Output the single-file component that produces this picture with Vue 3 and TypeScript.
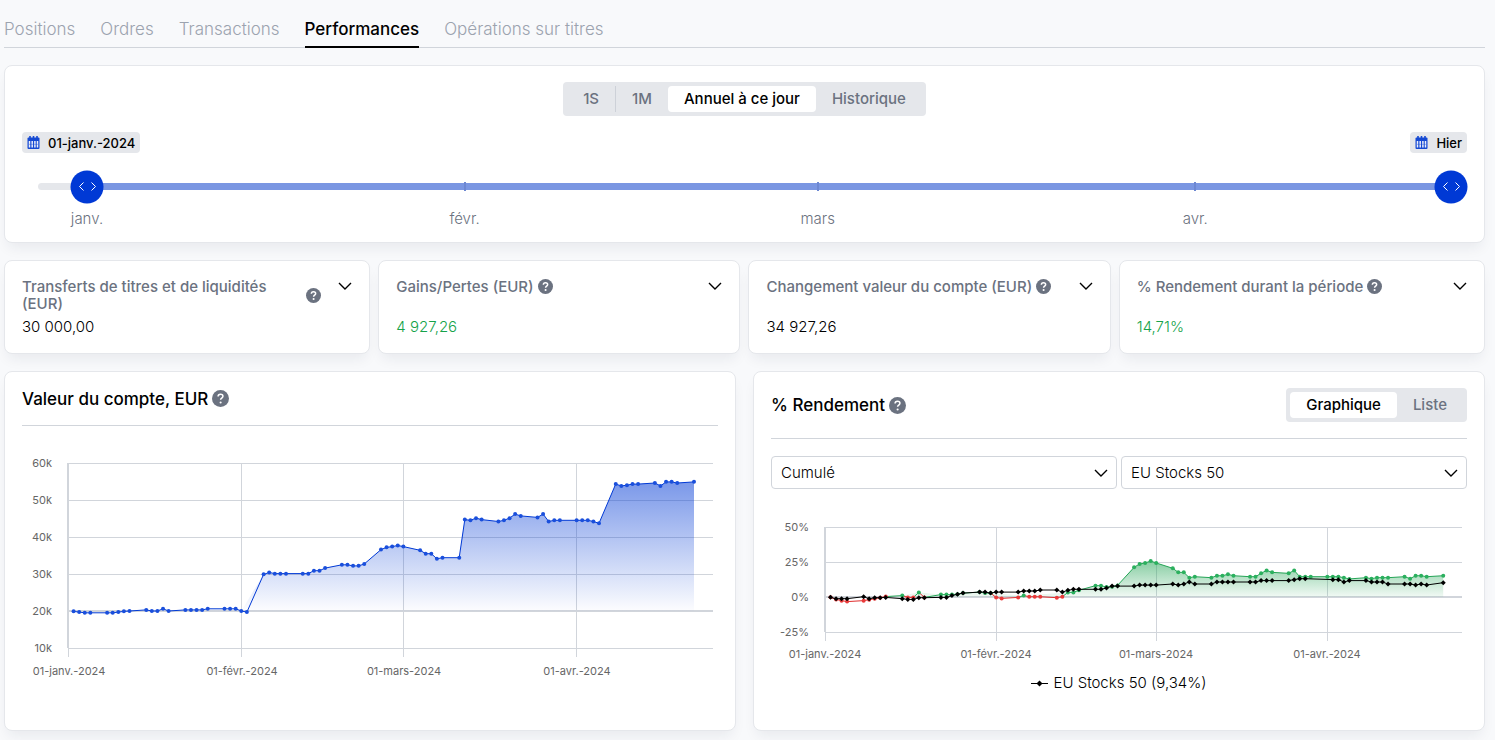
<script setup lang="ts">
import { computed, onBeforeUnmount, onMounted, ref } from 'vue'

interface Stat {
  title: string
  value: string
  positive: boolean
}
interface Dot {
  x: number
  y: number
  v: number
}

const tabs = ['Positions', 'Ordres', 'Transactions', 'Performances', 'Opérations sur titres']
const activeTab = ref('Performances')

const periods = ['1S', '1M', 'Annuel à ce jour', 'Historique']
const period = ref('Annuel à ce jour')

const views = ['Graphique', 'Liste']
const view = ref('Graphique')

const mode = ref('Cumulé')
const benchmark = ref('EU Stocks 50')

const stats: Stat[] = [
  { title: 'Transferts de titres et de liquidités (EUR)', value: '30 000,00', positive: false },
  { title: 'Gains/Pertes (EUR)', value: '4 927,26', positive: true },
  { title: 'Changement valeur du compte (EUR)', value: '34 927,26', positive: false },
  { title: '% Rendement durant la période', value: '14,71%', positive: true },
]

// Days elapsed since 1 January 2024
const months = [
  { day: 0, label: '01-janv.-2024', short: 'janv.' },
  { day: 31, label: '01-févr.-2024', short: 'févr.' },
  { day: 60, label: '01-mars-2024', short: 'mars' },
  { day: 91, label: '01-avr.-2024', short: 'avr.' },
]
const lastDay = 112
const domainDays = 115.4

// Trading days, Monday to Friday, starting on Tuesday 2 January
const tradingDays: number[] = []
for (let d = 1; d <= lastDay; d++) if (d % 7 < 5) tradingDays.push(d)

const accountValues = [
  19.9, 19.7, 19.5, 19.5,
  19.5, 19.5, 19.7, 19.9, 20,
  20.3, 20, 20, 20.6, 20,
  20.3, 20.3, 20.3, 20.3, 20.6,
  20.6, 20.6, 20.6, 20, 19.7,
  29.9, 30.4, 30.1, 30.1, 30.1,
  30.1, 30.1, 30.9, 30.9, 31.6,
  32.5, 32.5, 32.2, 32.2, 32.7,
  36.6, 37.2, 37.4, 37.7, 37.4,
  36.4, 35.5, 35.5, 34.1, 34.4,
  34.4, 44.7, 44.5, 45.1, 44.7,
  44.2, 44.5, 45.1, 46.2, 45.7,
  45.3, 46.2, 44.2, 44.5, 44.5,
  44.5, 44.5, 44.5, 44.2, 43.7,
  54.3, 53.8, 54, 54.3, 54.3,
  54.6, 53.8, 54.9, 54.9, 54.6,
  54.9,
]
const returnValues = [
  -0.2, -1.7, -2.6, -3.3,
  -2.6, -1.9, -1.2, -0.5, 0.3,
  1, -0.3, -0.3, 3.3, -0.3,
  1.7, 1.7, 1.7, 2, 2.8,
  3.5, 2.8, 2.8, -0.3, -1,
  -0.3, 1, 0.2, 0.2, 0.2,
  -0.5, 0.2, 3.3, 3.3, 4.8,
  8.1, 8.1, 7.1, 7.4, 8.3,
  21.2, 23.6, 24.3, 25.7, 24.3,
  20.5, 17.6, 17.6, 13.8, 14.5,
  13.8, 15.2, 15.2, 16.2, 15.2,
  14.5, 14.5, 16.9, 19, 17.6,
  16.9, 19, 14.5, 14.5, 14.5,
  14.5, 14.5, 14.5, 13.8, 12.9,
  13.8, 13.1, 13.8, 13.8, 13.8,
  14.5, 13.1, 15.2, 15.2, 14.5,
  15.2,
]
// null marks a day on which the benchmark's exchange is closed
const benchmarkValues: (number | null)[] = [
  -0.2, -1.2, -1.2, -1.2,
  0.2, -1.2, -0.5, -0.5, -0.3,
  -1.2, -1.7, -1.7, -0.5, -0.5,
  -0.3, -0.3, 1, 1.9, 2.8,
  3.5, 3.5, 2.8, 3.5, 3.5,
  3.5, 4.3, 4.3, 4.3, 5,
  5, 3.5, 4.8, 5.5, 5.5,
  5.5, 5.5, 6.4, 7.8, 7.8,
  7.8, 8.5, 8.5, 8.5, 8.5,
  9.3, 8.6, 9.3, 10.7, 9.3,
  9.3, 10.7, 10.7, 10.7, 10.7,
  10.7, 10.7, 11.7, 11.7, 11.7,
  11.7, 12.4, 13.1, 13.1, null,
  null, 12.4, 12.4, 10.7, 11.7,
  11.7, 10.7, 10.7, 10.7, 9.3,
  9.3, 9.3, 8.6, 9.3, 8.6,
  10.2,
]

const accountBox = ref<HTMLElement | null>(null)
const returnBox = ref<HTMLElement | null>(null)
const accountWidth = ref(697)
const returnWidth = ref(697)
let observer: ResizeObserver | undefined

function measure() {
  if (accountBox.value) accountWidth.value = accountBox.value.clientWidth
  if (returnBox.value) returnWidth.value = returnBox.value.clientWidth
}
onMounted(() => {
  measure()
  observer = new ResizeObserver(measure)
  if (accountBox.value) observer.observe(accountBox.value)
  if (returnBox.value) observer.observe(returnBox.value)
})
onBeforeUnmount(() => observer?.disconnect())

function buildDots(values: (number | null)[], x: (d: number) => number, y: (v: number) => number): Dot[] {
  const out: Dot[] = []
  values.forEach((v, i) => {
    if (v !== null) out.push({ x: x(tradingDays[i]), y: y(v), v })
  })
  return out
}
const toLine = (dots: Dot[]) => dots.map((p) => `${p.x.toFixed(1)},${p.y.toFixed(1)}`).join(' ')
const toArea = (dots: Dot[], base: number) =>
  `${dots[0].x.toFixed(1)},${base} ${toLine(dots)} ${dots[dots.length - 1].x.toFixed(1)},${base}`

const account = computed(() => {
  const left = 46
  const right = accountWidth.value - 5
  const x = (d: number) => left + (d * (right - left)) / domainDays
  const y = (v: number) => 204 - ((v - 10) * 185) / 50
  const dots = buildDots(accountValues, x, y)
  return {
    left,
    right,
    dots,
    line: toLine(dots),
    area: toArea(dots.filter((p) => p.v > 19.8), y(20)),
    ticks: [60, 50, 40, 30, 20, 10].map((v) => ({ label: `${v}k`, y: Math.round(y(v)), strong: v === 20 })),
    months: months.map((m) => ({ label: m.label, x: Math.floor(x(m.day)) })),
  }
})

const returns = computed(() => {
  const left = 54
  const right = returnWidth.value - 5
  const x = (d: number) => left + (d * (right - left)) / domainDays
  const y = (v: number) => 87 - v * 1.4
  const dots = buildDots(returnValues, x, y)
  const bench = buildDots(benchmarkValues, x, y)
  return {
    left,
    right,
    dots,
    bench,
    segments: dots.slice(1).map((p, i) => ({ a: dots[i], b: p })),
    benchLine: toLine(bench),
    area: toArea(dots.filter((p) => p.v > 0.5), y(0)),
    ticks: [50, 25, 0, -25].map((v) => ({ label: `${v}%`, y: Math.round(y(v)), strong: v === 0 })),
    months: months.map((m) => ({ label: m.label, x: Math.floor(x(m.day)) })),
  }
})

const tone = (v: number) => (v > 0.5 ? 'gain' : 'loss')
const diamond = (p: Dot) =>
  `${p.x - 2.5},${p.y} ${p.x},${p.y - 2.5} ${p.x + 2.5},${p.y} ${p.x},${p.y + 2.5}`
const trackPosition = (day: number) => ({ left: `${(day / 112) * 100}%` })
</script>

<template>
  <main class="page">
    <nav class="tabs">
      <a
        v-for="t in tabs"
        :key="t"
        href="#"
        class="tab"
        :class="{ active: t === activeTab }"
        @click.prevent="activeTab = t"
      >{{ t }}</a>
    </nav>

    <section class="card range">
      <div class="segmented">
        <button
          v-for="p in periods"
          :key="p"
          type="button"
          class="seg"
          :class="{ active: p === period, short: p.length < 3 }"
          @click="period = p"
        >{{ p }}</button>
      </div>
      <div class="dates">
        <button v-for="d in ['01-janv.-2024', 'Hier']" :key="d" type="button" class="date">
          <svg class="calendar" width="13" height="13" viewBox="0 0 13 13" aria-hidden="true">
            <rect x="0.5" y="1.5" width="12" height="11.5" rx="1" fill="#1549d3" />
            <path d="M3 0v3M6.5 0v3M10 0v3" stroke="#1549d3" stroke-width="1.6" />
            <path d="M2.5 5v6.5M5.2 5v6.5M7.9 5v6.5M10.5 5v6.5" stroke="#eef1fb" stroke-width="1.5" />
            <path d="M2 8.3h9" stroke="#1549d3" stroke-width="0.4" />
          </svg>
          <span>{{ d }}</span>
        </button>
      </div>
      <div class="slider">
        <div class="rail">
          <div class="fill">
            <i v-for="m in months.slice(1)" :key="m.day" class="notch" :style="trackPosition(m.day)"></i>
            <button type="button" class="handle start" aria-label="Date de début">
              <svg width="18" height="10" viewBox="0 0 18 10" aria-hidden="true">
                <path d="M5 1L1 5l4 4M13 1l4 4-4 4" fill="none" stroke="#fff" />
              </svg>
            </button>
            <button type="button" class="handle end" aria-label="Date de fin">
              <svg width="18" height="10" viewBox="0 0 18 10" aria-hidden="true">
                <path d="M5 1L1 5l4 4M13 1l4 4-4 4" fill="none" stroke="#fff" />
              </svg>
            </button>
          </div>
        </div>
        <div class="marks">
          <span v-for="m in months" :key="m.day" class="mark" :style="trackPosition(m.day)">{{ m.short }}</span>
        </div>
      </div>
    </section>

    <section class="stats">
      <article v-for="s in stats" :key="s.title" class="card stat">
        <header class="stat-head">
          <div class="stat-label">
            <h2 class="stat-title">{{ s.title }}</h2>
            <svg class="help" width="15" height="15" viewBox="0 0 16 16" aria-hidden="true">
              <circle cx="8" cy="8" r="8" fill="#6b7280" />
              <path d="M5.7 6.2c0-1.5 1-2.3 2.3-2.3s2.3.8 2.3 2c0 1.7-2.2 1.7-2.2 3.3" fill="none" stroke="#fff" stroke-width="1.6" />
              <circle cx="8.1" cy="11.8" r="1.1" fill="#fff" />
            </svg>
          </div>
          <button type="button" class="expand" :aria-label="`Détails ${s.title}`">
            <svg width="14" height="8" viewBox="0 0 14 8" aria-hidden="true">
              <path d="M1 1l6 6 6-6" fill="none" stroke="#000" stroke-width="1.4" />
            </svg>
          </button>
        </header>
        <p class="stat-value" :class="{ positive: s.positive }">{{ s.value }}</p>
      </article>
    </section>

    <section class="charts">
      <article class="card chart-card">
        <header class="chart-head">
          <h2 class="chart-title">Valeur du compte, EUR</h2>
          <svg class="help" width="17" height="17" viewBox="0 0 16 16" aria-hidden="true">
            <circle cx="8" cy="8" r="8" fill="#6b7280" />
            <path d="M5.7 6.2c0-1.5 1-2.3 2.3-2.3s2.3.8 2.3 2c0 1.7-2.2 1.7-2.2 3.3" fill="none" stroke="#fff" stroke-width="1.4" />
            <circle cx="8.1" cy="11.8" r="1" fill="#fff" />
          </svg>
        </header>
        <div ref="accountBox" class="plot account-plot">
          <svg class="chart" :width="accountWidth" height="240" role="img" aria-label="Valeur du compte, EUR">
            <defs>
              <linearGradient id="account-fill" x1="0" y1="0" x2="0" y2="1">
                <stop offset="0" stop-color="#0039d5" stop-opacity="0.52" />
                <stop offset="1" stop-color="#0039d5" stop-opacity="0.01" />
              </linearGradient>
            </defs>
            <g class="grid">
              <path
                v-for="t in account.ticks"
                :key="t.label"
                :class="{ strong: t.strong }"
                :d="`M${account.left} ${t.y}H${account.right}`"
              />
              <path v-for="m in account.months" :key="m.label" :d="`M${m.x} 19V213`" />
              <path class="strong" :d="`M${account.left} 19V204`" />
            </g>
            <polygon :points="account.area" fill="url(#account-fill)" />
            <polyline class="blue-line" :points="account.line" />
            <circle v-for="(p, i) in account.dots" :key="i" :cx="p.x" :cy="p.y" r="2" fill="#1a4fdc" />
            <g class="axis">
              <text v-for="t in account.ticks" :key="t.label" x="30" :y="t.y + 4" text-anchor="end">{{ t.label }}</text>
              <text v-for="m in account.months" :key="m.label" :x="m.x + 1" y="231" text-anchor="middle">{{ m.label }}</text>
            </g>
          </svg>
        </div>
      </article>

      <article class="card chart-card">
        <header class="chart-head tall">
          <h2 class="chart-title">% Rendement</h2>
          <svg class="help" width="17" height="17" viewBox="0 0 16 16" aria-hidden="true">
            <circle cx="8" cy="8" r="8" fill="#6b7280" />
            <path d="M5.7 6.2c0-1.5 1-2.3 2.3-2.3s2.3.8 2.3 2c0 1.7-2.2 1.7-2.2 3.3" fill="none" stroke="#fff" stroke-width="1.4" />
            <circle cx="8.1" cy="11.8" r="1" fill="#fff" />
          </svg>
          <div class="segmented push">
            <button
              v-for="v in views"
              :key="v"
              type="button"
              class="seg"
              :class="{ active: v === view }"
              @click="view = v"
            >{{ v }}</button>
          </div>
        </header>
        <div class="filters">
          <div class="select-box">
            <select v-model="mode" aria-label="Mode de calcul">
              <option>Cumulé</option>
            </select>
            <svg class="caret" width="14" height="8" viewBox="0 0 14 8" aria-hidden="true">
              <path d="M1 1l6 6 6-6" fill="none" stroke="#000" stroke-width="1.4" />
            </svg>
          </div>
          <div class="select-box">
            <select v-model="benchmark" aria-label="Indice de référence">
              <option>EU Stocks 50</option>
            </select>
            <svg class="caret" width="14" height="8" viewBox="0 0 14 8" aria-hidden="true">
              <path d="M1 1l6 6 6-6" fill="none" stroke="#000" stroke-width="1.4" />
            </svg>
          </div>
        </div>
        <div ref="returnBox" class="plot">
          <svg class="chart" :width="returnWidth" height="156" role="img" aria-label="% Rendement">
            <defs>
              <linearGradient id="return-fill" x1="0" y1="0" x2="0" y2="1">
                <stop offset="0" stop-color="#23a455" stop-opacity="0.55" />
                <stop offset="1" stop-color="#23a455" stop-opacity="0.06" />
              </linearGradient>
            </defs>
            <g class="grid">
              <path
                v-for="t in returns.ticks"
                :key="t.label"
                :class="{ strong: t.strong }"
                :d="`M${returns.left} ${t.y}H${returns.right}`"
              />
              <path v-for="m in returns.months" :key="m.label" :d="`M${m.x} 17V131`" />
              <path class="strong" :d="`M${returns.left} 17V122`" />
            </g>
            <polygon :points="returns.area" fill="url(#return-fill)" />
            <line
              v-for="(s, i) in returns.segments"
              :key="`s${i}`"
              class="segment"
              :class="tone(s.b.v)"
              :x1="s.a.x"
              :y1="s.a.y"
              :x2="s.b.x"
              :y2="s.b.y"
            />
            <circle v-for="(p, i) in returns.dots" :key="`d${i}`" class="dot" :class="tone(p.v)" :cx="p.x" :cy="p.y" r="2" />
            <polyline class="black-line" :points="returns.benchLine" />
            <polygon v-for="(p, i) in returns.bench" :key="`b${i}`" :points="diamond(p)" fill="#000" />
            <g class="axis">
              <text v-for="t in returns.ticks" :key="t.label" x="38" :y="t.y + 4" text-anchor="end">{{ t.label }}</text>
              <text v-for="m in returns.months" :key="m.label" :x="m.x" y="148" text-anchor="middle">{{ m.label }}</text>
            </g>
          </svg>
        </div>
        <p class="legend">
          <svg width="17" height="8" viewBox="0 0 17 8" aria-hidden="true">
            <path d="M0 4.5h17" stroke="#000" />
            <path d="M5.5 4.5l3-3 3 3-3 3z" fill="#000" />
          </svg>
          <span>EU Stocks 50 (9,34%)</span>
        </p>
      </article>
    </section>
  </main>
</template>

<style>
body {
  margin: 0;
  background: #f8f9fb;
}
</style>

<style scoped>
* {
  box-sizing: border-box;
}
.page {
  display: flex;
  flex-direction: column;
  gap: 17px;
  padding: 12px 10px 9px 4px;
  font-family: Inter, 'Liberation Sans', sans-serif;
  font-size: 15px;
  font-weight: 300;
  color: #000;
}
button,
select {
  font: inherit;
  color: inherit;
}
h2,
p {
  margin: 0;
}
.tabs {
  display: flex;
  gap: 25px;
  height: 36px;
  border-bottom: 1px solid #d1d5db;
}
.tab {
  height: 36px;
  padding-top: 6px;
  font-size: 17px;
  line-height: 22px;
  color: #9ca3af;
  text-decoration: none;
}
.tab.active {
  color: #000;
  font-weight: 500;
  border-bottom: 2px solid #000;
}
.card {
  background: #fff;
  border: 1px solid #e5e7eb;
  border-radius: 8px;
  box-shadow: 0 8px 14px -4px rgba(30, 41, 59, 0.08);
}
.range {
  display: flex;
  flex-direction: column;
  height: 178px;
  padding: 16px 17px 0;
}
.segmented {
  display: flex;
  flex: none;
  align-self: center;
  height: 34px;
  padding: 4px;
  border-radius: 4px;
  background: #e5e7eb;
}
.seg {
  padding: 0 16px;
  border: 0;
  border-radius: 4px;
  background: none;
  line-height: 24px;
  font-weight: 500;
  color: #6b7280;
  cursor: pointer;
}
.seg.active {
  background: #fff;
  color: #000;
}
.seg.short:first-child {
  border-right: 1px solid #cdd1d8;
  border-radius: 0;
}
.dates {
  display: flex;
  justify-content: space-between;
  margin-top: 16px;
}
.date {
  display: flex;
  align-items: center;
  gap: 8px;
  height: 21px;
  padding: 0 5px;
  border: 0;
  border-radius: 4px;
  background: #e5e7eb;
  font-size: 13px;
  font-weight: 500;
  color: #000;
}
.slider {
  margin-top: 30px;
  padding: 0 16px;
}
.rail {
  height: 7px;
  padding-left: 49px;
  border-radius: 4px;
  background: #e5e7eb;
}
.fill {
  position: relative;
  height: 7px;
  background: #7a96e2;
}
.notch {
  position: absolute;
  top: -1px;
  width: 2px;
  height: 9px;
  margin-left: -1px;
  background: #6c87d2;
}
.handle {
  position: absolute;
  top: 50%;
  display: flex;
  align-items: center;
  justify-content: center;
  width: 33px;
  height: 33px;
  padding: 0;
  border: 0;
  border-radius: 50%;
  background: #0039d5;
  transform: translate(-50%, -50%);
}
.handle.start {
  left: 0;
}
.handle.end {
  left: 100%;
}
.marks {
  position: relative;
  height: 20px;
  margin: 19px 0 0 49px;
}
.mark {
  position: absolute;
  line-height: 20px;
  color: #6b7280;
  transform: translateX(-50%);
}
.stats {
  display: grid;
  grid-template-columns: 366fr 362fr 362fr 366fr;
  gap: 8px;
}
.stat {
  height: 94px;
  padding: 17px 17px 0;
}
.stat-head {
  display: flex;
  align-items: flex-start;
  gap: 17px;
  min-height: 34px;
}
.stat-label {
  display: flex;
  align-items: center;
}
.stat-title {
  font-size: 15px;
  line-height: 17px;
  font-weight: 500;
  color: #6b7280;
}
.help {
  flex: none;
  margin-left: 4px;
}
.expand {
  display: flex;
  flex: none;
  margin-left: auto;
  padding: 4px 0;
  border: 0;
  background: none;
}
.stat-value {
  margin-top: 5px;
  line-height: 20px;
}
.stat-value.positive {
  color: #16a34a;
}
.charts {
  display: grid;
  grid-template-columns: 1fr 1fr;
  gap: 17px;
}
.chart-card {
  height: 360px;
  padding: 0 17px;
  min-width: 0;
}
.chart-head {
  display: flex;
  align-items: center;
  height: 54px;
  border-bottom: 1px solid #d1d5db;
}
.chart-head.tall {
  height: 67px;
}
.chart-title {
  font-size: 17px;
  line-height: 22px;
  font-weight: 500;
  color: #000;
}
.push {
  margin-left: auto;
}
.plot {
  overflow: hidden;
}
.account-plot {
  margin-top: 18px;
}
.chart {
  display: block;
}
.grid path {
  fill: none;
  stroke: #d1d5db;
  stroke-width: 1;
  shape-rendering: crispEdges;
}
.grid path.strong {
  stroke-width: 2;
}
.axis text {
  font-size: 11px;
  font-weight: 400;
  fill: #666;
}
.blue-line {
  fill: none;
  stroke: #0039d5;
}
.black-line {
  fill: none;
  stroke: #000;
}
.segment.gain {
  stroke: #23a455;
}
.segment.loss {
  stroke: #e02d2d;
}
.dot.gain {
  fill: #2bb05e;
}
.dot.loss {
  fill: #ea3a3a;
}
.filters {
  display: grid;
  grid-template-columns: 1fr 1fr;
  gap: 4px;
  margin: 17px 0 21px;
}
.select-box {
  position: relative;
}
.select-box select {
  display: block;
  width: 100%;
  height: 33px;
  padding: 0 36px 0 9px;
  border: 1px solid #d1d5db;
  border-radius: 4px;
  background: #fff;
  appearance: none;
}
.caret {
  position: absolute;
  top: 13px;
  right: 9px;
  pointer-events: none;
}
.legend {
  display: flex;
  align-items: center;
  justify-content: center;
  gap: 5px;
  margin-top: 7px;
  line-height: 20px;
}
</style>
